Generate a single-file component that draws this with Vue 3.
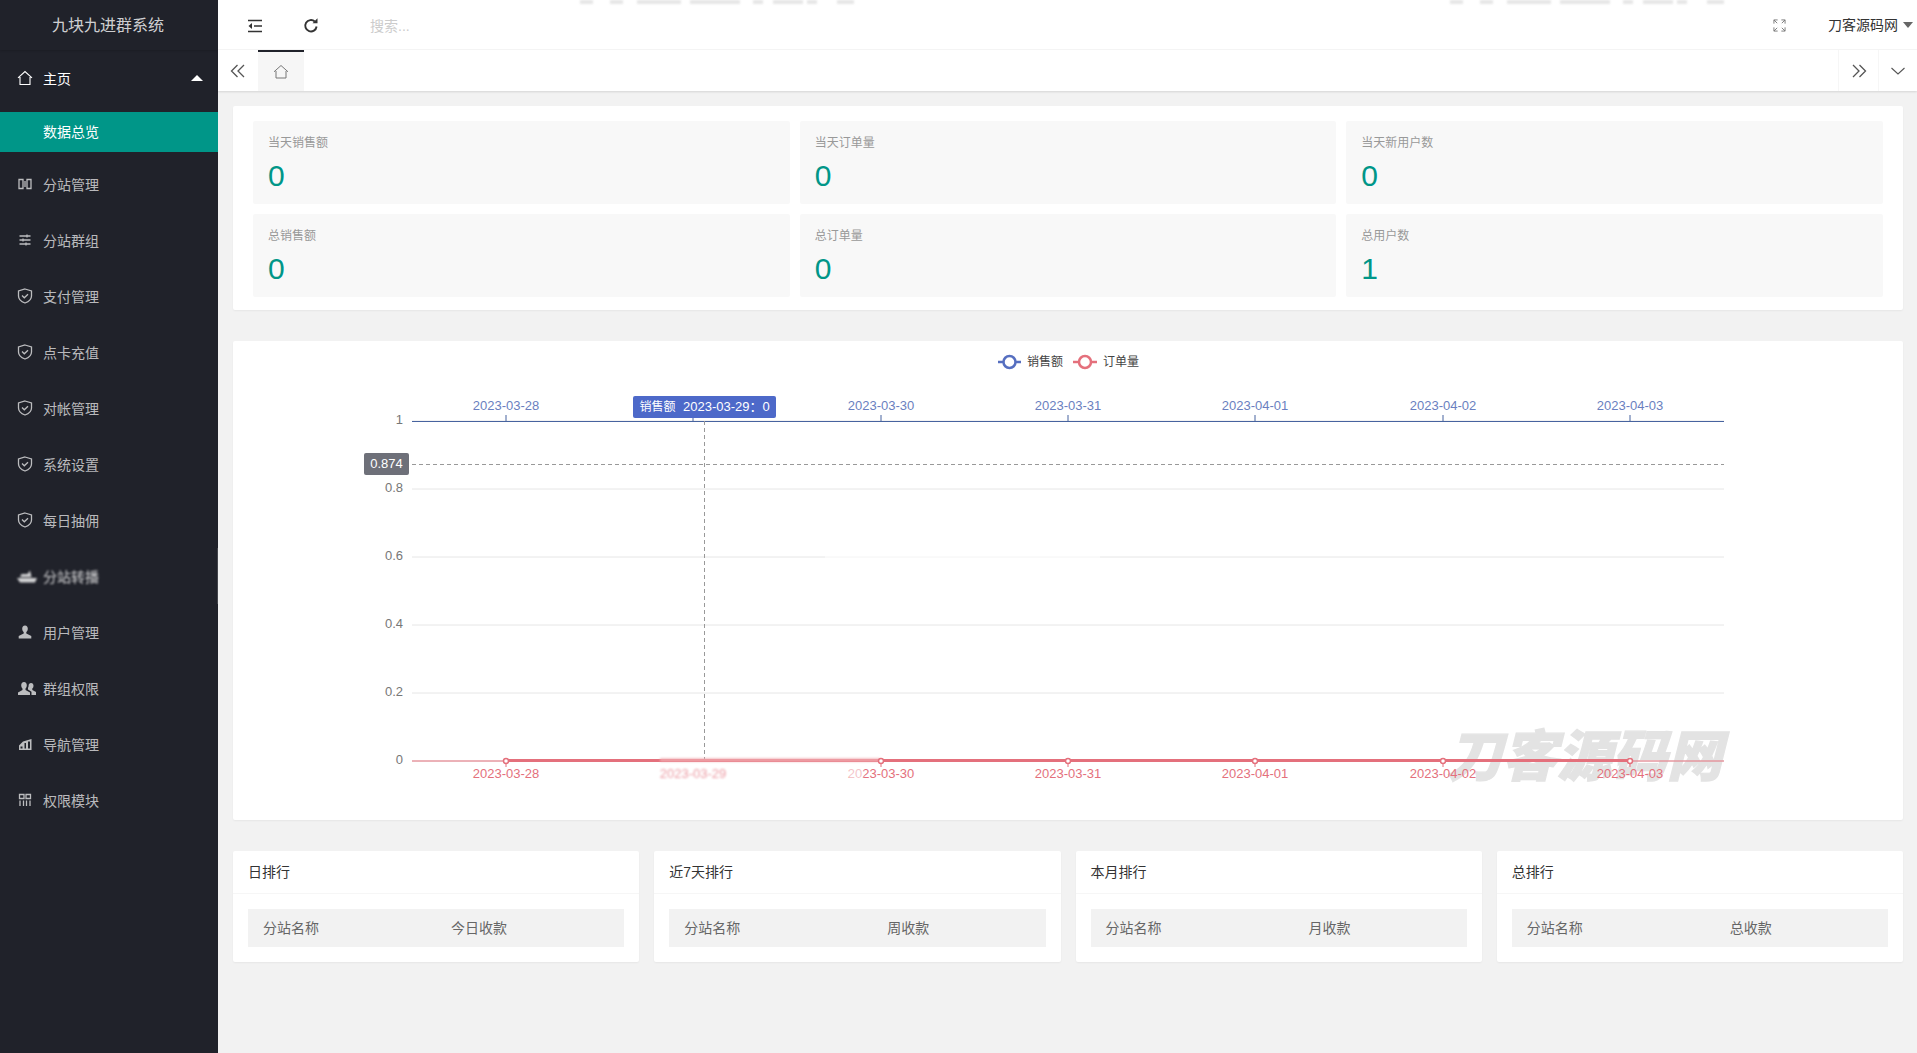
<template>
  <div class="layout">
    <aside class="side">
      <div class="logo">九块九进群系统</div>
      <ul class="menu">
        <li class="menu-item open">
          <svg class="ico" viewBox="0 0 16 16"><path d="M1 7.800 8 1.500l7 6.300M3 7v7.500h10V7" fill="none" stroke="currentColor" stroke-width="1.100" /></svg>
          <span>主页</span>
          <i class="arrow-up"></i>
        </li>
        <li class="menu-sub">数据总览</li>
        <li v-for="item in menus" :key="item.name" class="menu-item" :class="{ smudged: item.blur }">
          <svg class="ico" :class="{ wide: item.wide }" :viewBox="item.wide ? '0 0 20 16' : '0 0 16 16'">
            <path :d="item.icon" :fill="item.fill ? 'currentColor' : 'none'" :stroke="item.fill ? 'none' : 'currentColor'" stroke-width="1.300" />
          </svg>
          <span>{{ item.name }}</span>
        </li>
      </ul>
    </aside>

    <div class="main">
      <header class="topbar">
        <svg class="top-smudge" viewBox="0 0 1699 6">
          <rect v-for="b in smudges" :key="b[0]" :x="b[0]" y="0" :width="b[1]" height="4" fill="#e6e6e6" />
        </svg>
        <svg class="tool-ico" viewBox="0 0 16 16"><path d="M1 2.500h14M7 8h8M1 13.500h14" stroke="#333" stroke-width="1.500" fill="none" /><path d="M5 5v6L1.500 8z" fill="#333" /></svg>
        <svg class="tool-ico refresh" viewBox="0 0 16 16"><path d="M13.600 8.500A5.700 5.700 0 1 1 11.800 3.500" stroke="#333" stroke-width="1.900" fill="none" /><path d="M9.500 5.200h5v-5z" fill="#333" /></svg>
        <span class="search">搜索...</span>
        <div class="top-right">
          <svg class="full" viewBox="0 0 14 14"><path d="M1 5V1h4M9 1h4v4M13 9v4H9M5 13H1V9M1 1l3.500 3.500M13 1 9.500 4.500M13 13 9.500 9.500M1 13l3.500-3.500" stroke="#777" stroke-width="1" fill="none" /></svg>
          <span class="user">刀客源码网</span>
          <i class="arrow-down"></i>
        </div>
      </header>

      <nav class="tabs">
        <div class="tab-btn">
          <svg viewBox="0 0 16 16"><path d="M7.500 2 1.500 8l6 6M14 2 8 8l6 6" stroke="#555" stroke-width="1.300" fill="none" /></svg>
        </div>
        <div class="tab-home">
          <svg viewBox="0 0 16 16"><path d="M1 7.800 8 1.500l7 6.300M3 7v7h10V7" fill="none" stroke="#777" stroke-width="1" /></svg>
        </div>
        <div class="tab-space"></div>
        <div class="tab-btn bordered">
          <svg viewBox="0 0 16 16"><path d="M2 2l6 6-6 6M8.500 2l6 6-6 6" stroke="#555" stroke-width="1.300" fill="none" /></svg>
        </div>
        <div class="tab-btn bordered last">
          <svg viewBox="0 0 16 16"><path d="M1.500 5l6.500 6 6.500-6" stroke="#555" stroke-width="1.100" fill="none" /></svg>
        </div>
      </nav>

      <div class="content">
        <section class="card stats">
          <div v-for="s in stats" :key="s.label" class="stat">
            <div class="stat-label">{{ s.label }}</div>
            <div class="stat-num">{{ s.value }}</div>
          </div>
        </section>

        <section class="card chart">
          <svg class="chart-svg" viewBox="233 341 1670 479">
            <g font-size="12">
              <line x1="998" y1="362" x2="1021" y2="362" stroke="#566fc0" stroke-width="2.500" />
              <circle cx="1009.500" cy="362" r="6" fill="#fff" stroke="#566fc0" stroke-width="2.500" />
              <text x="1027" y="366" fill="#444">销售额</text>
              <line x1="1073" y1="362" x2="1097" y2="362" stroke="#e4707c" stroke-width="2.500" />
              <circle cx="1085" cy="362" r="6" fill="#fff" stroke="#e4707c" stroke-width="2.500" />
              <text x="1103" y="366" fill="#444">订单量</text>
            </g>

            <line v-for="g in grid" :key="g.label" x1="412" x2="1724" :y1="g.y" :y2="g.y" stroke="#e6e6e6" />
            <line x1="825" x2="1100" y1="557" y2="557" stroke="#fff" stroke-width="2" opacity="0.6" />
            <text v-for="g in grid" :key="'t' + g.label" x="403" :y="g.y + 3" text-anchor="end" font-size="13" fill="#777">{{ g.label }}</text>

            <line x1="412" x2="1724" y1="421.500" y2="421.500" stroke="#47639f" />
            <line v-for="d in dates" :key="'up' + d.x" :x1="d.x" :x2="d.x" y1="415" y2="421" stroke="#47639f" />
            <text v-for="d in topDates" :key="'ut' + d.x" :x="d.x" y="410" text-anchor="middle" font-size="13" fill="#6a7fc0">{{ d.label }}</text>

            <line x1="412" x2="1724" y1="464.500" y2="464.500" stroke="#999" stroke-dasharray="4 3" />
            <line x1="704.500" x2="704.500" y1="421" y2="760" stroke="#999" stroke-dasharray="4 3" />

            <rect x="633" y="396" width="143" height="22" rx="2" fill="#4d69c9" />
            <text x="639.500" y="411" font-size="12" fill="#fff">销售额</text>
            <text x="683" y="411" font-size="13" fill="#fff">2023-03-29：0</text>
            <rect x="364" y="453" width="45" height="22" rx="2" fill="#6e7079" />
            <text x="386.500" y="468" text-anchor="middle" font-size="13" fill="#fff">0.874</text>

            <text x="1447" y="776" class="mark-chart">刀客源码网</text>

            <line x1="412" x2="1724" y1="761" y2="761" stroke="#e4707c" />
            <line x1="506" x2="1630" y1="760.500" y2="760.500" stroke="#e4707c" stroke-width="3" />
            <line x1="660" x2="880" y1="760" y2="760" stroke="#f0a8ae" stroke-width="3" class="soft" />
            <g v-for="d in redDots" :key="'dot' + d">
              <line :x1="d" :x2="d" y1="761" y2="767" stroke="#e4707c" />
              <circle :cx="d" cy="761" r="2.500" fill="#fff" stroke="#e4707c" stroke-width="1.500" />
            </g>
            <text v-for="d in dates" :key="'bt' + d.x" :x="d.x" y="778" text-anchor="middle" font-size="13" fill="#e4707c" :class="{ 'smudge-text': d.x === 693 }">{{ d.label }}</text>
            <rect x="848" y="767" width="15" height="13" fill="#fff" opacity="0.6" class="soft" />
          </svg>
        </section>

        <section class="ranks">
          <div v-for="r in ranks" :key="r.title" class="card rank">
            <div class="rank-title">{{ r.title }}</div>
            <div class="rank-body">
              <div class="rank-head">
                <span>分站名称</span>
                <span>{{ r.col }}</span>
              </div>
            </div>
          </div>
        </section>
      </div>
    </div>
  </div>
</template>

<script setup>
const shield = 'M8 1 14.500 3v5c0 3.500-2.800 5.700-6.500 7C4.300 13.700 1.500 11.500 1.500 8V3zM5 7.500l2.300 2.300L11 6.200'

const menus = [
  { name: '分站管理', icon: 'M2 3.500h4v9H2zM10 3.500h4v9h-4zM8 5v6' },
  { name: '分站群组', icon: 'M2.500 4h11M2.500 8h11M2.500 12h11M10 2.500v3M6 6.500v3M9 10.500v3' },
  { name: '支付管理', icon: shield },
  { name: '点卡充值', icon: shield },
  { name: '对帐管理', icon: shield },
  { name: '系统设置', icon: shield },
  { name: '每日抽佣', icon: shield },
  { name: '分站转播', icon: 'M0 10h20l-2 4.500H3zM3 9l1.500-3h6l2.500-3.500L14.500 9z', fill: true, blur: true, wide: true },
  { name: '用户管理', icon: 'M8 1.500c1.900 0 2.800 1.400 2.800 3.200 0 1.500-.7 2.800-1.500 3.400v1.400l5 2.500v2.500H1.700V12l5-2.500V8.100C5.900 7.500 5.200 6.200 5.200 4.700 5.200 2.900 6.100 1.500 8 1.500z', fill: true },
  { name: '群组权限', icon: 'M7 2c1.800 0 2.800 1.400 2.800 3.200 0 1.400-.6 2.600-1.300 3.200V10l4.500 2.500V15H1v-2.500L5.500 10V8.400C4.800 7.800 4.200 6.600 4.200 5.200 4.200 3.400 5.200 2 7 2zM14 3c1.600 0 2.500 1.200 2.500 2.800 0 1.200-.5 2.300-1.200 2.800v1.300l3.700 2V15h-4.500v-3.200L11 9.500V7.800c.4-.5.600-1.400.6-2.400 0-1.300 1-2.400 2.400-2.400z', fill: true, wide: true },
  { name: '导航管理', icon: 'M2 9.500 6 5.500 14.500 3v11H2zM3.500 10.500v2h2v-2zM7.500 7v5.500h1.500V7zM11 5.500v7h2v-7z', fill: true },
  { name: '权限模块', icon: 'M2.500 2.500h4.500v4H2.500zM9 2.500h4.500v4H9zM3 8.500v5.500M6.500 8.500v5.500M9.500 8.500v5.500M13 8.500v5.500' }
]

const stats = [
  { label: '当天销售额', value: 0 },
  { label: '当天订单量', value: 0 },
  { label: '当天新用户数', value: 0 },
  { label: '总销售额', value: 0 },
  { label: '总订单量', value: 0 },
  { label: '总用户数', value: 1 }
]

const grid = [
  { label: '1', y: 421 },
  { label: '0.8', y: 489 },
  { label: '0.6', y: 557 },
  { label: '0.4', y: 625 },
  { label: '0.2', y: 693 },
  { label: '0', y: 761 }
]

const labels = ['2023-03-28', '2023-03-29', '2023-03-30', '2023-03-31', '2023-04-01', '2023-04-02', '2023-04-03']
const dates = labels.map((label, i) => ({ label, x: 506 + Math.round(i * 187.3) }))
// 03-29 sits under the tooltip on top and under the smudge below
const topDates = dates.filter((d) => d.x !== 693)
const redDots = topDates.map((d) => d.x)

// what is left of the cut watermark along the top edge
const smudges = [[362, 13], [392, 13], [419, 44], [472, 50], [535, 10], [555, 30], [589, 10], [619, 17], [1232, 13], [1262, 13], [1289, 44], [1342, 50], [1405, 10], [1425, 30], [1459, 10], [1489, 17]]

const ranks = [
  { title: '日排行', col: '今日收款' },
  { title: '近7天排行', col: '周收款' },
  { title: '本月排行', col: '月收款' },
  { title: '总排行', col: '总收款' }
]
</script>

<style>
html, body {
  margin: 0;
  background: #f2f2f2;
}
</style>

<style scoped>
.layout {
  display: flex;
  height: 1053px;
  overflow: hidden;
  font-family: "Liberation Sans", "Noto Sans CJK SC", sans-serif;
  font-size: 14px;
  color: #666;
  background: #f2f2f2;
}

.side {
  width: 218px;
  flex-shrink: 0;
  background: #20222a;
  color: rgba(255, 255, 255, 0.7);
}

.logo {
  height: 50px;
  line-height: 51px;
  padding-right: 2px;
  text-align: center;
  font-size: 16px;
  color: rgba(255, 255, 255, 0.8);
  box-shadow: 0 1px 2px rgba(0, 0, 0, 0.15);
}

.menu {
  list-style: none;
  margin: 0;
  padding: 0;
}

.menu-item {
  height: 56px;
  display: flex;
  align-items: center;
  padding-left: 17px;
  position: relative;
}

.menu-item.open {
  height: 56px;
  margin-bottom: 6px;
  color: #fff;
}

.menu-item .ico {
  width: 16px;
  height: 16px;
  margin-right: 10px;
  flex-shrink: 0;
}

.menu-item .ico.wide {
  width: 20px;
  margin-right: 6px;
}

.smudged {
  color: rgba(255, 255, 255, 0.8);
}

.smudged .ico,
.smudged span {
  filter: blur(0.8px);
}

.smudged::after {
  content: "";
  position: absolute;
  right: 0;
  top: 0;
  width: 1px;
  height: 56px;
  background: #44464c;
}

.arrow-up {
  position: absolute;
  right: 15px;
  top: 25px;
  border: 6px solid transparent;
  border-top: 0;
  border-bottom-color: #fff;
}

.menu-sub {
  height: 40px;
  line-height: 40px;
  padding-left: 43px;
  margin-bottom: 4px;
  background: #009688;
  color: #fff;
}

.main {
  flex: 1;
  min-width: 0;
  display: flex;
  flex-direction: column;
}

.topbar {
  height: 50px;
  background: #fff;
  display: flex;
  align-items: center;
  position: relative;
  overflow: hidden;
  border-bottom: 1px solid #f6f6f6;
  box-sizing: border-box;
}

.top-smudge {
  position: absolute;
  left: 0;
  top: 0;
  width: 1699px;
  height: 6px;
  filter: blur(1px);
}

.tool-ico {
  width: 16px;
  height: 16px;
  margin-left: 29px;
  margin-top: 2px;
}

.tool-ico.refresh {
  margin-left: 40px;
}

.search {
  margin-left: 51px;
  color: #ccc;
  font-size: 14px;
  margin-top: 1px;
}

.top-right {
  margin-left: auto;
  display: flex;
  align-items: center;
  padding-right: 4px;
}

.full {
  width: 13px;
  height: 13px;
  margin-right: 42px;
  margin-top: 2px;
}

.user {
  color: #333;
  font-size: 14px;
  margin-bottom: 1px;
}

.arrow-down {
  margin-left: 5px;
  border: 5px solid transparent;
  border-bottom: 0;
  border-top: 6px solid #666;
}

.tabs {
  height: 41px;
  background: #fff;
  display: flex;
  box-shadow: 0 1px 2px rgba(0, 0, 0, 0.12);
  position: relative;
}

.tab-btn {
  width: 40px;
  display: flex;
  align-items: center;
  justify-content: center;
  box-sizing: border-box;
}

.tab-btn svg {
  width: 16px;
  height: 16px;
}

.tab-btn.bordered {
  border-left: 1px solid #f6f6f6;
}

.tab-btn.last {
  width: 39px;
}

.tab-home {
  width: 46px;
  background: #f6f6f6;
  border-top: 2px solid #20222a;
  box-sizing: border-box;
  display: flex;
  align-items: center;
  justify-content: center;
}

.tab-home svg {
  width: 16px;
  height: 16px;
}

.tab-space {
  flex: 1;
}

.content {
  padding: 15px 14px 0 15px;
  display: flex;
  flex-direction: column;
  gap: 31px;
}

.card {
  background: #fff;
  border-radius: 2px;
  box-shadow: 0 1px 2px rgba(0, 0, 0, 0.05);
}

.stats {
  display: grid;
  grid-template-columns: repeat(3, 1fr);
  gap: 10px;
  padding: 15px 20px 13px;
}

.stat {
  height: 83px;
  box-sizing: border-box;
  padding: 13px 15px 0;
  background: #f8f8f8;
  border-radius: 2px;
}

.stat-label {
  font-size: 12px;
  line-height: 18px;
  color: #999;
}

.stat-num {
  font-size: 30px;
  line-height: 36px;
  margin-top: 6px;
  color: #009688;
}

.chart {
  height: 479px;
}

.chart-svg {
  display: block;
  width: 100%;
  height: 100%;
  font-family: "Liberation Sans", "Noto Sans CJK SC", sans-serif;
}

.mark-chart {
  font-size: 55px;
  font-weight: 900;
  font-style: italic;
  fill: #e3e3e3;
  stroke: #e3e3e3;
  stroke-width: 1.200px;
}

.soft {
  filter: blur(1px);
}

.smudge-text {
  filter: blur(0.8px);
  opacity: 0.7;
}

.ranks {
  display: grid;
  grid-template-columns: repeat(4, 1fr);
  gap: 15px;
}

.rank-title {
  height: 43px;
  line-height: 42px;
  padding: 0 15px;
  color: #333;
  border-bottom: 1px solid #f6f6f6;
  box-sizing: border-box;
}

.rank-body {
  padding: 15px;
}

.rank-head {
  height: 38px;
  box-sizing: border-box;
  padding: 0 15px 2px;
  display: grid;
  grid-template-columns: 203px 1fr;
  align-items: center;
  background: #f2f2f2;
  color: #666;
}

.rank:first-child .rank-head {
  grid-template-columns: 188px 1fr;
}
</style>
